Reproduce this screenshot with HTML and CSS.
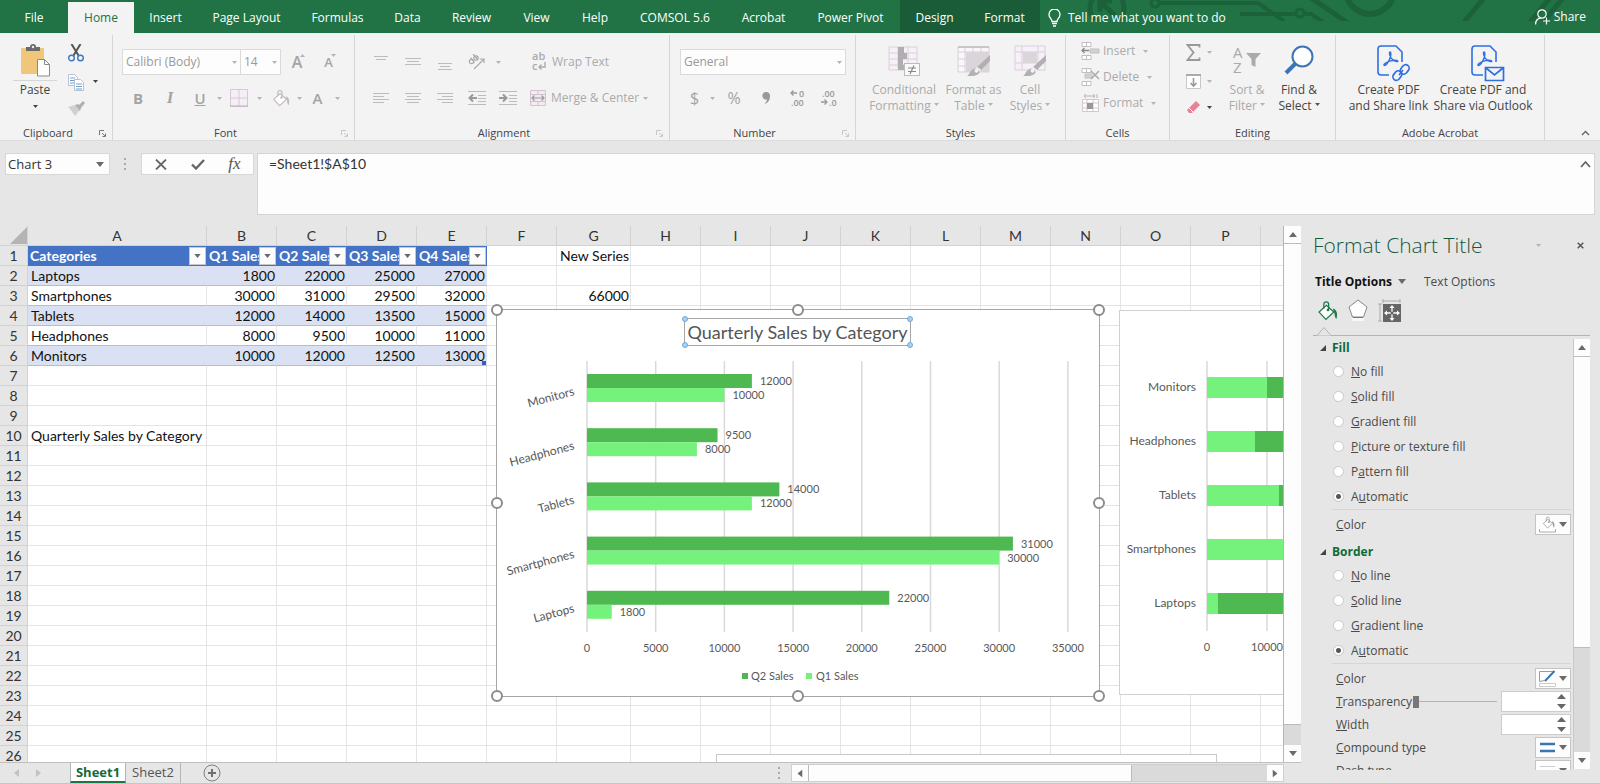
FILE: index.html
```html
<!DOCTYPE html>
<html lang="en">
<head>
<meta charset="utf-8">
<title>Sales workbook</title>
<link rel="stylesheet" href="styles.css">
</head>
<body>
<svg class="defs" aria-hidden="true">
  <symbol id="caret" viewBox="0 0 5 3"><path d="M0 0h5L2.500 3z" fill="currentColor"/></symbol>
  <symbol id="tri" viewBox="0 0 8 5"><path d="M0 0h8L4 5z" fill="currentColor"/></symbol>
  <symbol id="launch" viewBox="0 0 7 7"><path d="M.5 5V.5H5M3 3l3 3M6.500 3.500v3h-3" fill="none" stroke="currentColor"/></symbol>
  <symbol id="bucket" viewBox="0 0 20 20"><path d="M2 11.500 9 5l7 6.500-7.500 7z" fill="#fff" stroke="currentColor" stroke-width="1.200"/><path d="M6.500 8V4a2.300 2.300 0 0 1 4.600 0v5" fill="none" stroke="currentColor" stroke-width="1.200"/><circle cx="10.500" cy="9.500" r="1.300" fill="currentColor"/><path d="M15 8c4 1 5 5 3.500 10-1-1-1.500-2-1.800-5z" class="pour"/></symbol>
  <symbol id="brush" viewBox="0 0 24 23"><path d="M23 1v6L14 16l-4-3z" fill="#b2b0b2"/><path d="M10 13l4 3-2 2-4-3z" fill="#f3f3f3"/><path d="M8 14.500c2 0 5 2 4.500 4C11 21.500 6 22.500 0 22c3-1.500 3-7 8-7.500z" fill="#b2b0b2"/><ellipse cx="9.500" cy="16.800" rx="2" ry="2" fill="#f3f3f3"/></symbol>
  <symbol id="pdf" viewBox="0 0 34 38"><path d="M13 31H5a3 3 0 0 1-3-3V5a3 3 0 0 1 3-3h15l6 6v10" fill="none" stroke="#2f6fe0" stroke-width="1.600"/><path d="M8.500 21.500c-2-.6 1-3 4-4s6.500-1.800 9-.8c1.600 1.400-2.500 1.500-5-1.200s-3.500-4.500-3-7c.7-1.600 2 0 1.200 3.500S10.500 21.500 8.500 21.500z" fill="none" stroke="#2f6fe0" stroke-width="1.300"/></symbol>
</svg>

<header class="tabbar">
  <svg class="circuit" viewBox="0 0 520 21" fill="none" stroke="#1b623a" aria-hidden="true">
    <circle cx="27" cy="8" r="17" stroke-width="5"/><path d="M20 0v12M20 1h12M21 2l14 14" stroke-width="5"/>
    <circle cx="75" cy="3" r="4" stroke-width="3"/><path d="M80 3h98l26 18M160 14h56M225 14h6l12 8" stroke-width="4"/>
    <circle cx="220" cy="13" r="4" stroke-width="3"/><path d="M231-2l37 25" stroke-width="5"/><circle cx="290" cy="-10" r="24" stroke-width="6"/>
    <path d="M404-2l-20 24M470-2l-20 24M483-2l-20 24" stroke-width="5"/>
  </svg>
  <nav class="tabs">
    <a href="#">File</a><a href="#" class="on">Home</a><a href="#">Insert</a><a href="#">Page Layout</a><a href="#">Formulas</a><a href="#">Data</a><a href="#">Review</a><a href="#">View</a><a href="#">Help</a><a href="#">COMSOL 5.6</a><a href="#">Acrobat</a><a href="#">Power Pivot</a><a href="#" class="ctx">Design</a><a href="#" class="ctx">Format</a>
  </nav>
  <button class="tell"><svg width="13" height="18" viewBox="0 0 13 18" fill="none" stroke="#fff" stroke-width="1.300"><path d="M4 12.500c0-3-3-3.500-3-7a5.500 5.500 0 0 1 11 0c0 3.500-3 4-3 7zM4 14.500h5M5 17h3"/></svg>Tell me what you want to do</button>
  <button class="share"><svg width="15" height="16" viewBox="0 0 15 16" fill="none" stroke="#fff" stroke-width="1.200"><circle cx="7" cy="5" r="4.200"/><path d="M.6 15.500c0-4 2-6 5-6.300M11.500 8.500v7M8 12h7"/></svg>Share</button>
</header>

<section class="ribbon" aria-label="Ribbon">
  <div class="group g-clip">
    <div class="body">
      <button class="paste">
        <svg width="30" height="33" viewBox="0 0 30 33"><rect x="1" y="4" width="23" height="26" rx="1" fill="#efc67a"/><path d="M6 7V3h4a3 3 0 0 1 6 0h4v4z" fill="#6b6b6b"/><circle cx="13" cy="3" r="1.200" fill="#f3f3f3"/><path d="M17.500 15.500h7l5 5v11.500h-12z" fill="#fff" stroke="#8a8a8a"/><path d="M24.500 15.500v5h5" fill="none" stroke="#8a8a8a"/></svg>
        <span class="rule"></span><span>Paste</span><svg class="caret"><use href="#caret"/></svg>
      </button>
      <div class="mini">
        <button aria-label="Cut"><svg width="16" height="18" viewBox="0 0 16 18" fill="none"><path d="M3.500 0 10.500 11.500M12.500 0 5.500 11.500" stroke="#555" stroke-width="2"/><circle cx="3.500" cy="14" r="2.800" stroke="#3b78bd" stroke-width="1.400"/><circle cx="12.500" cy="14" r="2.800" stroke="#3b78bd" stroke-width="1.400"/></svg></button>
        <button aria-label="Copy"><svg width="16" height="18" viewBox="0 0 16 18" fill="#fff" stroke="#b8c2cc"><path d="M.5 1.500h6l3 3v8h-9z"/><path d="M2 5h5M2 7.500h5M2 10h5" stroke="#6a9fd0"/><path d="M6.500 6.500h6l3 3v8h-9z"/><path d="M8 11h6M8 13.500h6M8 16h6" stroke="#6a9fd0"/></svg><svg class="caret dark"><use href="#caret"/></svg></button>
        <button aria-label="Format Painter"><svg width="17" height="15" viewBox="0 0 17 15"><path d="M0 6l7-2 5 5-5 6C5 12 3 9 0 6z" fill="#d0d0d0"/><path d="M7 4l3-1 1 1 4-4 2 2-4 5-1 3z" fill="#b0b0b0"/></svg></button>
      </div>
    </div>
    <div class="cap">Clipboard<svg class="launch dark"><use href="#launch"/></svg></div>
  </div>

  <div class="group g-font">
    <div class="stack">
      <div class="row fonts">
        <label class="pick"><select aria-label="Font"><option>Calibri (Body)</option></select><svg class="caret"><use href="#caret"/></svg></label>
        <label class="pick"><select aria-label="Font size"><option>14</option></select><svg class="caret"><use href="#caret"/></svg></label>
        <button class="big" aria-label="Grow font">A<svg class="caret up"><use href="#caret"/></svg></button>
        <button class="small" aria-label="Shrink font">A<svg class="caret up flat"><use href="#caret"/></svg></button>
      </div>
      <div class="row styles">
        <button><b>B</b></button><button><i>I</i></button><button><u>U</u></button><svg class="caret"><use href="#caret"/></svg>
        <button aria-label="Borders"><svg width="18" height="18" viewBox="0 0 18 18"><path d="M.5.5h17v17H.5zM9 0v18M0 9h18" fill="#f6eef6" stroke="#d4cad4"/><path d="M0 17h18" stroke="#b8b4b8"/></svg></button><svg class="caret"><use href="#caret"/></svg>
        <button aria-label="Fill color"><svg class="gray" width="18" height="18"><use href="#bucket"/></svg></button><svg class="caret"><use href="#caret"/></svg>
        <button><strong>A</strong></button><svg class="caret"><use href="#caret"/></svg>
      </div>
    </div>
    <div class="cap">Font<svg class="launch"><use href="#launch"/></svg></div>
  </div>

  <div class="group g-align">
    <div class="stack">
      <div class="row al1">
        <button aria-label="Top align"><svg width="16" height="18"><path d="M1 3.500h14M3 6.500h10" class="ln"/></svg></button>
        <button aria-label="Middle align"><svg width="16" height="18"><path d="M0 5.500h16M2 8.500h12M0 11.500h16" class="ln"/></svg></button>
        <button aria-label="Bottom align"><svg width="16" height="18"><path d="M1 10.500h14M3 13.500h10M1 16.500h14" class="ln"/></svg></button>
        <button aria-label="Orientation"><svg width="17" height="16" viewBox="0 0 17 16"><g fill="none" stroke="#aaa" stroke-width="1.200"><circle cx="3.500" cy="7.500" r="2.200"/><path d="M2.500 3.500l4 5"/><circle cx="8" cy="4" r="2.200"/><path d="M5 0l5 6M6 15l10-10M12 5h4v4"/></g></svg></button><svg class="caret"><use href="#caret"/></svg>
        <button class="txt"><svg width="14" height="18" viewBox="0 0 14 18"><text x="0" y="7" class="glyph">ab</text><text x="0" y="17" class="glyph">c</text><path d="M13 9v5H7M9.500 11.500 7 14l2.500 2.500" fill="none" stroke="#aaa" stroke-width="1.400"/></svg>Wrap Text</button>
      </div>
      <div class="row al2">
        <button aria-label="Align left"><svg width="16" height="12"><path d="M0 1.500h16M0 4.500h11M0 7.500h16M0 10.500h11" class="ln"/></svg></button>
        <button aria-label="Center"><svg width="16" height="12"><path d="M0 1.500h16M2 4.500h12M0 7.500h16M2 10.500h12" class="ln"/></svg></button>
        <button aria-label="Align right"><svg width="16" height="12"><path d="M0 1.500h16M5 4.500h11M0 7.500h16M5 10.500h11" class="ln"/></svg></button>
        <button aria-label="Decrease indent"><svg width="18" height="14"><path d="M0 .5h18M10 4.500h8M10 7.500h8M10 10.500h8M0 13.500h18" class="ln"/><path d="M9 7H2M5 3.500 1.500 7 5 10.500" fill="none" stroke="#999" stroke-width="2"/></svg></button>
        <button aria-label="Increase indent"><svg width="18" height="14"><path d="M0 .5h18M10 4.500h8M10 7.500h8M10 10.500h8M0 13.500h18" class="ln"/><path d="M0 7h7M4 3.500 7.500 7 4 10.500" fill="none" stroke="#999" stroke-width="2"/></svg></button>
        <button class="txt"><svg width="16" height="16" viewBox="0 0 16 16"><path d="M.5.5h15v15H.5zM8 .5v4M8 11.500v4M.5 4.500h15M.5 11.500h15" fill="#f3eaf3" stroke="#cfc4cf"/><path d="M2 8h12M4.500 5.500 2 8l2.500 2.500M11.500 5.500 14 8l-2.500 2.500" fill="none" stroke="#999" stroke-width="1.200"/></svg>Merge &amp; Center</button><svg class="caret"><use href="#caret"/></svg>
      </div>
    </div>
    <div class="cap">Alignment<svg class="launch"><use href="#launch"/></svg></div>
  </div>

  <div class="group g-num">
    <div class="stack">
      <div class="row nf"><label class="pick"><select aria-label="Number format"><option>General</option></select><svg class="caret"><use href="#caret"/></svg></label></div>
      <div class="row nr">
        <button class="sym">$</button><svg class="caret"><use href="#caret"/></svg><button class="sym">%</button>
        <button aria-label="Comma style"><svg width="8" height="12" viewBox="0 0 8 12"><path d="M4 0a3.600 3.600 0 0 1 4 4c0 4-2 7-5.500 8C4 10 5 9 5 7.500A3.800 3.800 0 1 1 4 0z" fill="#999"/></svg></button>
        <button aria-label="Increase decimal"><svg width="16" height="18" viewBox="0 0 16 18"><path d="M7 4H1M3.500 1.500 1 4l2.500 2.500" fill="none" stroke="#999" stroke-width="1.300"/><text x="9" y="8" class="dec">0</text><text x="1" y="17" class="dec">.00</text></svg></button>
        <button aria-label="Decrease decimal"><svg width="16" height="18" viewBox="0 0 16 18"><path d="M0 13h6M3.500 10.500 6 13l-2.500 2.500" fill="none" stroke="#999" stroke-width="1.300"/><text x="1" y="8" class="dec">.00</text><text x="8" y="17" class="dec">.0</text></svg></button>
      </div>
    </div>
    <div class="cap">Number<svg class="launch"><use href="#launch"/></svg></div>
  </div>

  <div class="group g-sty">
    <div class="body">
      <button class="tall"><svg width="32" height="32" viewBox="0 0 32 32"><path d="M1 2h28v23H1zM10 2v23M20 2v23M1 8h28M1 14h28M1 20h28" fill="#f8f0f8" stroke="#d8d0d8"/><path d="M10 2h6v6h-6zM10 8h9v6h-9zM10 14h5v6h-5zM10 20h6v5h-6z" fill="#b0aeb0"/><rect x="16.500" y="18.500" width="15" height="12" fill="#fafafa" stroke="#bbb"/><path d="M20 23h8M20 26.500h8M26 20.500l-4 8.500" stroke="#888" stroke-width="1.200"/></svg><span>Conditional<br>Formatting <svg class="caret"><use href="#caret"/></svg></span></button>
      <button class="tall"><svg width="34" height="32" viewBox="0 0 34 32"><path d="M1 2h31v25H1zM8 2v25M16 2v25M24 2v25M1 7h31M1 14h31M1 21h31" fill="#fbf6fb" stroke="#d8d0d8"/><path d="M9 7h23v20H9z" fill="#d9d5d9"/><path d="M1 2h31" stroke="#aaa"/><use href="#brush" x="10" y="9" width="24" height="23"/></svg><span>Format as<br>Table <svg class="caret"><use href="#caret"/></svg></span></button>
      <button class="tall"><svg width="34" height="32" viewBox="0 0 34 32"><path d="M2 1h30v24H2zM9 1v24M25 1v24M2 7h30M2 18h30" fill="#f8f0f8" stroke="#d8d0d8"/><path d="M10 7h14v11H10z" fill="#d9d5d9"/><use href="#brush" x="10" y="9" width="24" height="23"/></svg><span>Cell<br>Styles <svg class="caret"><use href="#caret"/></svg></span></button>
    </div>
    <div class="cap">Styles</div>
  </div>

  <div class="group g-cell">
    <div class="list">
      <button><svg width="19" height="18" viewBox="0 0 19 18"><path d="M1 .5h9v4H1zM1 13.500h9v4H1zM5.500 .5v4M5.500 13.500v4" fill="#fff" stroke="#c4bcc4"/><path d="M9 7h9v4H9z" fill="#d4d0d4" stroke="#c0c0c0"/><path d="M8 8.500H1M3.500 6 1 8.500 3.500 11" fill="none" stroke="#888" stroke-width="1.300"/></svg>Insert<svg class="caret"><use href="#caret"/></svg></button>
      <button><svg width="19" height="18" viewBox="0 0 19 18"><path d="M1 .5h9v4H1zM1 13.500h9v4H1zM5.500 .5v4M5.500 13.500v4" fill="#fff" stroke="#c4bcc4"/><path d="M4 6h7v4H4z" fill="#d4d0d4" stroke="#c0c0c0"/><path d="M10 3l8 8M18 3l-8 8" stroke="#aaa" stroke-width="1.500"/></svg>Delete<svg class="caret"><use href="#caret"/></svg></button>
      <button><svg width="19" height="19" viewBox="0 0 19 19"><path d="M1.500 5.500h16v12h-16zM6 5v13M12 5v13M1 9h17M1 14h17" fill="#fff" stroke="#d0c8d0"/><path d="M6 9h6v6H6z" fill="#999"/><path d="M3 2h11M5 0 3 2l2 2M12 0l2 2-2 2M16 0v4" fill="none" stroke="#b4b4b4"/></svg>Format<svg class="caret"><use href="#caret"/></svg></button>
    </div>
    <div class="cap">Cells</div>
  </div>

  <div class="group g-edit">
    <div class="body">
      <div class="mini">
        <button aria-label="AutoSum"><svg width="15" height="17" viewBox="0 0 15 17"><path d="M13.500 3.500V1H1.500l6 7.500-6 7.500h12v-2.500" fill="none" stroke="#999" stroke-width="1.800"/></svg><svg class="caret"><use href="#caret"/></svg></button>
        <button aria-label="Fill"><svg width="15" height="15" viewBox="0 0 15 15"><path d="M.5.5h14v14H.5z" fill="#fff" stroke="#c8c8c8"/><path d="M0 1h15" stroke="#aaa" stroke-width="2"/><path d="M7.500 4v8M4.500 9l3 3 3-3" fill="none" stroke="#999" stroke-width="1.600"/></svg><svg class="caret"><use href="#caret"/></svg></button>
        <button aria-label="Clear"><svg width="15" height="13" viewBox="0 0 15 13"><path d="M1 9 10 0l4 4-8 8H3z" fill="#e88097"/><path d="M3 7l4 4" stroke="#fff"/></svg><svg class="caret dark"><use href="#caret"/></svg></button>
      </div>
      <button class="tall"><svg width="30" height="32" viewBox="0 0 30 32"><text x="1" y="13" class="az">A</text><text x="1" y="28" class="az">Z</text><path d="M14 8h15l-5.500 6v8l-4-2v-6z" fill="#aaa"/></svg><span>Sort &amp;<br>Filter <svg class="caret"><use href="#caret"/></svg></span></button>
      <button class="tall live"><svg width="30" height="32" viewBox="0 0 30 32"><path d="M2 28 12 18" stroke="#3a76b5" stroke-width="4"/><circle cx="18.500" cy="11.500" r="10" fill="#fff" stroke="#3a76b5" stroke-width="2"/></svg><span>Find &amp;<br>Select <svg class="caret"><use href="#caret"/></svg></span></button>
    </div>
    <div class="cap">Editing</div>
  </div>

  <div class="group g-pdf">
    <div class="body">
      <button class="tall live"><svg width="34" height="38" viewBox="0 0 34 38"><use href="#pdf" width="34" height="38"/><g fill="none" stroke="#2f6fe0" stroke-width="1.700"><rect x="-4.500" y="-3.500" width="10" height="7" rx="3.500" transform="translate(21 32) rotate(-52)"/><rect x="-5.500" y="-3.500" width="10" height="7" rx="3.500" transform="translate(29 25) rotate(-52)"/><path d="M23 31l4-5"/></g></svg><span>Create PDF<br>and Share link</span></button>
      <button class="tall live"><svg width="34" height="38" viewBox="0 0 34 38"><use href="#pdf" width="34" height="38"/><path d="M15.500 23.500h18v13h-18zM16 24l8.500 7 8.500-7" fill="#f3f3f3" stroke="#2f6fe0" stroke-width="1.700"/></svg><span>Create PDF and<br>Share via Outlook</span></button>
    </div>
    <div class="cap">Adobe Acrobat</div>
  </div>
  <div class="tail"><button aria-label="Collapse ribbon"><svg width="9" height="6" viewBox="0 0 9 6"><path d="M1 5l3.500-3.500L8 5" fill="none" stroke="#666" stroke-width="1.400"/></svg></button></div>
</section>

<section class="fbar" aria-label="Formula bar">
  <label class="name"><input aria-label="Name box" value="Chart 3"><svg class="tri"><use href="#tri"/></svg></label>
  <span class="dots"></span>
  <div class="fbtns">
    <button aria-label="Cancel"><svg width="12" height="11" viewBox="0 0 12 11"><path d="M1 .5l10 10M11 .5l-10 10" stroke="#666" stroke-width="1.800"/></svg></button>
    <button aria-label="Enter"><svg width="14" height="11" viewBox="0 0 14 11"><path d="M1 5.500l4 4L13 1" fill="none" stroke="#666" stroke-width="2.400"/></svg></button>
    <button class="fx" aria-label="Insert function"><i>fx</i></button>
  </div>
  <div class="formula"><textarea aria-label="Formula">=Sheet1!$A$10</textarea><svg width="11" height="8" viewBox="0 0 11 8"><path d="M1 7l4.500-5L10 7" fill="none" stroke="#666" stroke-width="1.800"/></svg></div>
</section>

<main>
  <div class="book">
    <div class="view">
      <div class="sheet">
        <table id="grid"></table>
        <figure class="chart c1">
          <svg id="chart1" width="602" height="386"></svg>
          <i class="h nw"></i><i class="h n"></i><i class="h ne"></i><i class="h w"></i><i class="h e"></i><i class="h sw"></i><i class="h s"></i><i class="h se"></i>
          <figcaption>Quarterly Sales by Category<i class="d nw"></i><i class="d ne"></i><i class="d sw"></i><i class="d se"></i></figcaption>
        </figure>
        <figure class="chart c2"><svg id="chart2" width="500" height="385"></svg></figure>
        <figure class="chart c3"></figure>
      </div>
      <div class="vscroll"><button aria-label="Scroll up"><svg class="tri up"><use href="#tri"/></svg></button><span class="thumb"></span><button aria-label="Scroll down"><svg class="tri"><use href="#tri"/></svg></button></div>
    </div>
    <footer>
      <svg class="navs" width="28" height="8" viewBox="0 0 28 8"><path d="M5 0v8L0 4zM22 0v8l5-4z" fill="#c2c2c2"/></svg>
      <a href="#" class="tab cur">Sheet1</a><a href="#" class="tab">Sheet2</a>
      <button class="add" aria-label="New sheet"><svg width="18" height="18" viewBox="0 0 18 18"><circle cx="9" cy="9" r="8" fill="none" stroke="#808080"/><path d="M9 5v8M5 9h8" stroke="#707070" stroke-width="2"/></svg></button>
      <span class="dots"></span>
      <div class="hscroll"><button aria-label="Scroll left"><svg class="tri left"><use href="#tri"/></svg></button><span class="thumb"></span><button aria-label="Scroll right"><svg class="tri right"><use href="#tri"/></svg></button></div>
    </footer>
  </div>

  <aside>
    <div class="phead"><h2>Format Chart Title</h2><svg class="caret"><use href="#caret"/></svg><button aria-label="Close"><svg width="7" height="7" viewBox="0 0 7 7"><path d="M.7.7l5.600 5.600M6.300.7.7 6.300" stroke="#555" stroke-width="1.500"/></svg></button></div>
    <div class="ptabs"><button class="cur">Title Options<svg class="tri"><use href="#tri"/></svg></button><button>Text Options</button></div>
    <div class="picons">
      <button aria-label="Fill and line"><svg class="green" width="21" height="21"><use href="#bucket"/></svg></button>
      <button aria-label="Effects"><svg width="20" height="22" viewBox="0 0 20 22"><path d="M10 1l9 7-3.500 10h-11L1 8z" fill="#fff" stroke="#888"/><path d="M4 19h12v3H4z" fill="#f7f7f7"/><path d="M5 18.500h10" stroke="#777"/></svg></button>
      <button aria-label="Size and properties"><svg width="23" height="23" viewBox="0 0 23 23"><path d="M5 2h17M5 0v4M22 0v4M2 5v17M0 5h4M0 22h4" stroke="#aaa"/><path d="M5 5h18v18H5z" fill="#666"/><path d="M14 8v12M8 14h12" stroke="#fff" stroke-width="1.300"/><path d="M14 6l2.500 3h-5zM14 22l2.500-3h-5zM6 14l3-2.500v5zM22 14l-3-2.500v5z" fill="#fff"/><circle cx="14" cy="14" r="1.500" fill="#666"/></svg></button>
    </div>
    <svg class="notch" width="18" height="9" viewBox="0 0 18 9"><path d="M0 8.500h4L11 .5l7 8" fill="#e6e6e6" stroke="#b4b4b4"/></svg>
    <div class="pbody">
      <div class="opts">
        <h3>Fill</h3>
        <label><input type="radio" name="fill"><span><u>N</u>o fill</span></label>
        <label><input type="radio" name="fill"><span><u>S</u>olid fill</span></label>
        <label><input type="radio" name="fill"><span><u>G</u>radient fill</span></label>
        <label><input type="radio" name="fill"><span><u>P</u>icture or texture fill</span></label>
        <label><input type="radio" name="fill"><span>P<u>a</u>ttern fill</span></label>
        <label><input type="radio" name="fill" checked><span>A<u>u</u>tomatic</span></label>
        <hr>
        <div class="prop"><span><u>C</u>olor</span><button class="drop" aria-label="Fill color"><svg class="blue" width="17" height="17" viewBox="0 0 17 17"><use href="#bucket" x="2" y="0" width="15" height="13"/><path d="M.5 13v3h16v-3" fill="#fff" stroke="#aaa"/></svg><svg class="tri"><use href="#tri"/></svg></button></div>
        <h3 class="second">Border</h3>
        <label><input type="radio" name="line"><span><u>N</u>o line</span></label>
        <label><input type="radio" name="line"><span><u>S</u>olid line</span></label>
        <label><input type="radio" name="line"><span><u>G</u>radient line</span></label>
        <label><input type="radio" name="line" checked><span>A<u>u</u>tomatic</span></label>
        <hr>
        <div class="prop"><span><u>C</u>olor</span><button class="drop" aria-label="Line color"><svg width="17" height="17" viewBox="0 0 17 17"><path d="M.5 11.500v-10h14M.5 11.500l5-1" fill="none" stroke="#999"/><path d="M15.500 1 6 11" stroke="#3a76b5" stroke-width="2"/><path d="M.5 13.500h16v3H.5z" fill="#fff" stroke="#ccc"/></svg><svg class="tri"><use href="#tri"/></svg></button></div>
        <div class="prop"><label for="tr"><u>T</u>ransparency</label><input type="range" id="tr" value="0"><span class="spin"><input aria-label="Transparency value"><svg width="9" height="15" viewBox="0 0 9 15"><path d="M0 5h9L4.500 0zM0 10h9l-4.500 5z" fill="#666"/></svg></span></div>
        <div class="prop"><label for="wd"><u>W</u>idth</label><span class="spin"><input id="wd"><svg width="9" height="15" viewBox="0 0 9 15"><path d="M0 5h9L4.500 0zM0 10h9l-4.500 5z" fill="#666"/></svg></span></div>
        <div class="prop"><span><u>C</u>ompound type</span><button class="drop" aria-label="Compound type"><svg width="17" height="17" viewBox="0 0 17 17"><path d="M1 5h15M1 12h15" stroke="#3a76b5" stroke-width="2.400"/></svg><svg class="tri"><use href="#tri"/></svg></button></div>
        <div class="prop"><span><u>D</u>ash type</span><button class="drop" aria-label="Dash type"><svg width="17" height="17" viewBox="0 0 17 17"><path d="M1 4.500h15" stroke="#ccc"/><path d="M1 8.500h15" stroke="#999" stroke-dasharray="3 1"/></svg><svg class="tri"><use href="#tri"/></svg></button></div>
      </div>
      <div class="vscroll inner"><button aria-label="Scroll up"><svg class="tri up"><use href="#tri"/></svg></button><span class="thumb"></span><button aria-label="Scroll down"><svg class="tri"><use href="#tri"/></svg></button></div>
    </div>
  </aside>
</main>
<script src="app.js"></script>
</body>
</html>
```
FILE: styles.css
```css
* { box-sizing: border-box; }
body { margin: 0; height: 100vh; overflow: hidden; display: flex; flex-direction: column; background: #e6e6e6; color: #333; font: 12px/16px "Open Sans", "Noto Sans", sans-serif; }
button, input, select, textarea { font: inherit; color: inherit; border: 0; background: none; padding: 0; margin: 0; outline: 0; border-radius: 0; }
a { color: inherit; text-decoration: none; }
svg { display: block; flex: none; }
.defs { position: absolute; width: 0; height: 0; }
.caret { width: 5px; height: 3px; color: #b4b4b4; }
.caret.dark { color: #444; }
.tri { width: 8px; height: 5px; color: #6a6a6a; }
.up { transform: rotate(180deg); }
.left { transform: rotate(90deg); }
.right { transform: rotate(-90deg); }
.pour { fill: currentColor; }

/* tab strip */
.tabbar { position: relative; flex: none; display: flex; height: 33px; background: #217346; color: #fff; }
.circuit { position: absolute; right: 0; top: 0; width: 520px; height: 21px; }
.tabs { display: grid; grid-template-columns: 68px 66px 63px 99px 83px 57px 71px 59px 58px 102px 75px 99px 69px 71px; }
.tabs a { display: flex; align-items: center; justify-content: center; padding-top: 2px; white-space: nowrap; }
.tabs .on { margin-top: 2px; padding-top: 0; background: #f3f3f3; color: #217346; }
.tabs .ctx { background: #1a5c38; }
.tell { position: relative; display: flex; align-items: center; gap: 7px; padding: 2px 0 0 8px; }
.share { position: relative; margin-left: auto; display: flex; align-items: center; gap: 4px; padding-right: 14px; }

/* ribbon */
.ribbon { flex: none; display: flex; height: 108px; background: #f3f3f3; color: #aaa; border-bottom: 1px solid #dcdcdc; }
.group { position: relative; flex: none; display: flex; flex-direction: column; justify-content: space-between; border-right: 1px solid #d6d6d6; margin-top: 2px; }
.g-clip { width: 113px; } .g-font { width: 242px; } .g-align { width: 315px; } .g-num { width: 186px; } .g-sty { width: 210px; } .g-cell { width: 104px; } .g-edit { width: 166px; } .g-pdf { width: 209px; }
.cap { height: 14px; line-height: 14px; text-align: center; color: #444; font-size: 11px; padding-right: 16px; }
.g-sty .cap, .g-cell .cap, .g-edit .cap, .g-pdf .cap { padding-right: 0; }
.launch { position: absolute; right: 6px; bottom: 3px; width: 7px; height: 7px; color: #c8c8c8; }
.launch.dark { color: #777; }
.body { display: flex; padding-top: 9px; }
.paste { width: 44px; margin-left: 13px; display: flex; flex-direction: column; align-items: center; color: #444; }
.paste .rule { width: 44px; height: 1px; background: #d6d6d6; margin: 3px 0 1px; }
.paste .caret { color: #444; margin-top: 7px; }
.mini { display: flex; flex-direction: column; justify-content: space-between; height: 72px; }
.g-clip .mini { margin-left: 11px; }
.mini button { display: flex; align-items: center; gap: 9px; }
.stack { display: flex; flex-direction: column; gap: 10px; padding-top: 14px; }
.row { display: grid; height: 26px; align-items: center; justify-items: center; }
.fonts { grid-template-columns: 119px 40px 32px 31px; padding-left: 9px; }
.styles { grid-template-columns: 32px 32px 28px 10px 30px 10px 33px 4px 33px 6px; padding-left: 9px; }
.pick { position: relative; width: 100%; height: 26px; border: 1px solid #dadada; background: #fdfdfd; }
.pick + .pick { border-left: 0; }
.pick select { appearance: none; width: 100%; height: 24px; padding-left: 3px; color: #999; }
.pick .caret { position: absolute; right: 3px; top: 11px; }
.row button { display: flex; align-items: center; justify-content: center; }
.row b, .row i, .row u, .row strong { font-size: 15px; color: #a4a4a4; }
.row i { font-family: "Liberation Serif", serif; font-size: 17px; font-weight: bold; }
.row u, .row strong { font-weight: 600; }
.big, .small { position: relative; font-weight: 600; font-size: 16px; color: #a4a4a4; }
.small { font-size: 13px; }
.big .caret, .small .caret { position: absolute; right: -3px; top: 0; }
.small .flat { transform: none; }
.al1 { grid-template-columns: 32px 32px 31px 32px 4px 1fr; padding-left: 10px; }
.al2 { grid-template-columns: 32px 32px 32px 31px 32px 118px 6px; padding-left: 10px; }
.row .txt { justify-self: start; gap: 5px; white-space: nowrap; margin-left: 6px; }
.al1 .txt { margin-left: 36px; gap: 6px; }
.al1 .txt svg { overflow: visible; }
.al1 .caret { margin-left: 8px; }
.ln { stroke: #bcbcbc; fill: none; }
.glyph { font-size: 11px; font-weight: 600; fill: #aaa; }
.nf { grid-template-columns: 166px; padding-left: 10px; }
.nr { grid-template-columns: 29px 6px 38px 26px 38px 24px; padding-left: 10px; }
.nr svg { overflow: visible; }
.sym { font-size: 16px; color: #a4a4a4; }
.dec { font-size: 9px; font-weight: 600; fill: #999; }
.tall { display: flex; flex-direction: column; align-items: center; gap: 5px; white-space: nowrap; }
.tall > svg:first-child { height: 32px; overflow: visible; }
.tall .caret { display: inline-block; vertical-align: 4px; }
.live { color: #444; } .live .caret { color: #555; }
.g-sty .body { display: grid; grid-template-columns: 78px 61px 52px; padding: 10px 0 0 9px; }
.list { display: flex; flex-direction: column; gap: 8px; padding: 7px 0 0 15px; }
.list button { display: flex; align-items: center; gap: 3px; height: 18px; }
.list .caret { margin-left: 5px; }
.g-edit .mini { width: 39px; margin-left: 16px; height: 70px; }
.g-edit .mini button { gap: 6px; }
.g-edit .tall { margin-top: 1px; width: 44px; }
.g-edit .tall + .tall { margin-left: 8px; }
.az { font-size: 15px; fill: #aaa; }
.g-pdf .body { display: grid; grid-template-columns: 85px 104px; padding-left: 10px; }
.g-pdf .tall { gap: 6px; }
.g-pdf .tall > svg { height: 38px; margin: 0 0 -6px 8px; }
.tail { flex: 1; display: flex; align-items: flex-end; justify-content: flex-end; padding: 0 10px 4px 0; }

/* formula bar */
.fbar { flex: none; display: flex; height: 79px; padding: 12px 5px 0 5px; font-size: 13px; }
.name { display: flex; align-items: center; width: 105px; height: 22px; padding: 0 5px 0 2px; background: #fdfdfd; border: 1px solid #d8d8d8; }
.name input { flex: 1; min-width: 0; color: #333; }
.dots { width: 2px; height: 12px; margin: 5px 15px 5px 14px; background: repeating-linear-gradient(#aaa 0 2px, transparent 2px 5px); }
.fbtns { width: 113px; height: 22px; display: grid; grid-template-columns: 1fr 1fr 1fr; background: #fdfdfd; border: 1px solid #d8d8d8; }
.fbtns button { display: flex; align-items: center; justify-content: center; }
.fx { font-family: "Liberation Serif", serif; font-size: 17px; color: #555; }
.formula { flex: 1; display: flex; margin-left: 3px; height: 62px; background: #fdfdfd; border: 1px solid #d4d4d4; padding: 1px 3px 0 11px; }
.formula textarea { flex: 1; resize: none; font-family: Lato, sans-serif; font-size: 14px; line-height: 18px; color: #333; }
.formula svg { margin-top: 5px; }

/* workbook */
main { flex: 1; min-height: 0; display: flex; border-bottom: 1px solid #c6c6c6; }
.book { flex: 1; min-width: 0; display: flex; flex-direction: column; }
.view { flex: 1; min-height: 0; display: flex; padding-top: 6px; }
.sheet { position: relative; flex: 1; min-width: 0; overflow: hidden; background: #fff; border-right: 1px solid #b5b5b5; }
table { table-layout: fixed; border-collapse: separate; border-spacing: 0; width: 1331px; font: 14px/19px Lato, sans-serif; color: #111; }
td, th { height: 20px; padding: 0 1px 0 3px; border: solid #e4e4e4; border-width: 0 1px 1px 0; white-space: nowrap; overflow: hidden; font-weight: 400; }
thead th, tbody th { padding: 0; background: #e6e6e6; border-color: #d2d2d2; color: #333; text-align: center; }
.corner svg { margin-left: auto; }
.num { text-align: right; }
.hd { background: #4472c4; color: #fff; font-weight: 700; border-color: #4472c4; padding: 0 0 0 2px; }
.hd div { display: flex; height: 19px; overflow: hidden; }
.hd span { flex: 1; min-width: 0; overflow: hidden; }
.hd button { flex: none; width: 17px; height: 18px; margin-top: 1px; background: #fdfdfd; border: 1px solid #c8c8c8; display: flex; align-items: center; justify-content: center; }
.hd .tri { width: 7px; height: 4px; }
.band { background: #d9e1f2; border-color: #d9e1f2 #d9e1f2 #a9bfe4; }
.plain { border-bottom-color: #a9bfe4; }
.end { background: linear-gradient(#3f5fb5, #3f5fb5) right bottom / 4px 4px no-repeat #d9e1f2; }
.chart { position: absolute; margin: 0; background: #fff; }
.chart text { font: 11px Lato, sans-serif; fill: #595959; }
.chart .cat { font-size: 12px; }
.c1 { left: 497px; top: 84px; width: 602px; height: 386px; outline: 1px solid #a6a6a6; }
.c2 { left: 1119px; top: 84px; width: 500px; height: 385px; border: 1px solid #d0d0d0; }
.c3 { left: 716px; top: 528px; width: 501px; height: 200px; border: 1px solid #c8c8c8; }
.c1 figcaption { position: absolute; left: 187px; top: 8px; width: 227px; height: 28px; border: 1px solid #a6a6a6; text-align: center; white-space: nowrap; font: 18px/26px Lato, sans-serif; color: #555; }
.h { position: absolute; width: 12px; height: 12px; margin: -6px; border: 2px solid #8c8c8c; border-radius: 50%; background: #fff; }
.d { position: absolute; width: 6px; height: 6px; margin: -3px; border: 1px solid #6aa9de; border-radius: 50%; background: #a9d2f5; }
.nw, .w, .sw { left: 0; } .n, .s { left: 50%; } .ne, .e, .se { left: 100%; }
.nw, .n, .ne { top: 0; } .w, .e { top: 50%; } .sw, .s, .se { top: 100%; }

.vscroll { flex: none; width: 17px; display: flex; flex-direction: column; background: #dadada; }
.vscroll button { flex: none; height: 17px; background: #fdfdfd; display: flex; align-items: center; justify-content: center; }
.vscroll .thumb { background: #fdfdfd; border: solid #bbb; border-width: 1px 0; flex: 0 1 90%; margin-bottom: auto; }
.inner .thumb { flex-basis: 68%; }
footer { flex: none; display: flex; align-items: stretch; height: 21px; border-top: 1px solid #c0c0c0; font-size: 13px; color: #555; }
.navs { margin: 6px 28px 0 14px; }
.tab { width: 55px; border-right: 1px solid #b4b4b4; text-align: center; line-height: 19px; }
.cur.tab { width: 56px; background: #fff; border-left: 1px solid #b4b4b4; border-bottom: 2px solid #217346; color: #17693a; font-weight: 700; }
.add { margin-left: 22px; }
footer .dots { margin: 4px 11px 0 auto; }
.hscroll { width: 493px; height: 18px; margin: 1px 17px 0 0; border: 1px solid #cfcfcf; display: flex; background: #dadada; }
.hscroll button { width: 16px; background: #fdfdfd; display: flex; align-items: center; justify-content: center; }
.hscroll .thumb { flex: 0 0 324px; background: #fdfdfd; border: solid #bbb; border-width: 0 1px; margin-right: auto; }

/* format pane */
aside { flex: none; width: 299px; display: flex; flex-direction: column; padding: 11px 10px 13px 12px; color: #4a4a4a; }
.phead { display: flex; align-items: center; height: 28px; }
h2 { flex: 1; margin: 0; font-size: 21px; line-height: 28px; font-weight: 300; color: #17593a; white-space: nowrap; }
.phead .caret { margin-right: 36px; }
.phead button { margin-right: 6px; }
.ptabs { display: flex; gap: 18px; height: 20px; margin-top: 13px; padding-left: 2px; }
.ptabs .cur { display: flex; align-items: center; gap: 6px; font-weight: 700; color: #111; }
.ptabs .tri { margin-bottom: 2px; }
.picons { display: flex; align-items: center; gap: 10px; height: 24px; margin: 6px 0 0 4px; }
.notch { margin-top: 5px; margin-bottom: -1px; position: relative; }
.pbody { flex: 1; min-height: 0; display: flex; border-top: 1px solid #b4b4b4; padding-top: 3px; }
.inner { border-left: 1px solid #c8c8c8; margin-bottom: 1px; }
.opts { flex: 1; min-width: 0; overflow: hidden; padding-right: 2px; }
h3 { position: relative; margin: 0; padding-left: 19px; height: 20px; font-size: 12px; line-height: 18px; font-weight: 700; color: #0c6b37; }
h3::before { content: ""; position: absolute; left: 7px; top: 6px; border: solid transparent; border-width: 0 0 6px 6px; border-bottom-color: #444; }
.second { margin-top: 8px; }
.opts > label { display: flex; align-items: center; gap: 7px; height: 25px; padding-left: 20px; }
.opts > label input { appearance: none; width: 11px; height: 11px; border: 1px solid #c8c8c8; border-radius: 50%; background: #fff; }
.opts > label input:checked { background: radial-gradient(#555 0 2px, #fff 3px); }
hr { margin: 0 0 4px 19px; border: 0; height: 1px; background: #d6d6d6; }
.prop { display: flex; align-items: center; justify-content: space-between; height: 21px; margin: 0 0 2px 23px; }
.drop { display: flex; align-items: center; justify-content: space-between; width: 36px; height: 21px; padding: 0 3px; background: #fdfdfd; border: 1px solid #c4c4c4; }
.spin { display: flex; align-items: center; width: 70px; height: 21px; background: #fff; border: 1px solid #ccc; padding-right: 4px; }
.spin input { flex: 1; min-width: 0; }
input[type=range] { appearance: none; flex: 1; min-width: 0; height: 12px; margin: 0 4px 0 1px; background: linear-gradient(#b4b4b4, #b4b4b4) center / 100% 1px no-repeat; }
input[type=range]::-webkit-slider-thumb { appearance: none; width: 6px; height: 12px; background: #777; }
.green { color: #1f7a4a; } .gray { color: #c0b8c0; } .blue { color: #999; } .blue .pour { fill: #3a76b5; }
```
FILE: app.js
```js
const rows = {
  1: ['Categories', 'Q1 Sales', 'Q2 Sales', 'Q3 Sales', 'Q4 Sales', '', 'New Series'],
  2: ['Laptops', 1800, 22000, 25000, 27000],
  3: ['Smartphones', 30000, 31000, 29500, 32000, '', 66000],
  4: ['Tablets', 12000, 14000, 13500, 15000],
  5: ['Headphones', 8000, 9500, 10000, 11000],
  6: ['Monitors', 10000, 12000, 12500, 13000],
  10: ['Quarterly Sales by Category']
};
const letters = 'ABCDEFGHIJKLMNOPQ'.split('');
const widths = [28, 179, 70, 70, 70, 70, 70, 74].concat(Array(10).fill(70));
let html = '<colgroup>' + widths.map(w => `<col style="width:${w}px">`).join('') + '</colgroup><thead><tr><th class="corner"><svg width="17" height="17"><path d="M17 0v17H0z" fill="#b4b4b4"/></svg></th>';
html += letters.map(l => `<th>${l === 'Q' ? '' : l}</th>`).join('') + '</tr></thead><tbody>';
for (let r = 1; r <= 26; r++) {
  html += `<tr><th>${r}</th>`;
  letters.forEach((l, c) => {
    const v = (rows[r] || [])[c] ?? '';
    if (r === 1 && c < 5) {
      html += `<td class="hd"><div><span>${v}</span><button aria-label="Filter ${v}"><svg class="tri"><use href="#tri"/></svg></button></div></td>`;
      return;
    }
    const cls = [];
    if (typeof v === 'number') cls.push('num');
    if (r <= 6 && c < 5) cls.push(r % 2 ? 'plain' : 'band');
    if (r === 6 && c === 4) cls.push('end');
    html += `<td class="${cls.join(' ')}">${v}</td>`;
  });
  html += '</tr>';
}
document.getElementById('grid').innerHTML = html + '</tbody>';

const order = [6, 5, 4, 3, 2].map(r => rows[r]);
const dark = '#4eb951', light = '#74f27b';
let s = '';
for (let i = 0; i <= 7; i++) {
  const x = 90 + i * 68.7;
  s += `<path d="M${x} 51V322" stroke="#d9d9d9" stroke-width="1.500"/><text x="${x}" y="342" text-anchor="middle">${i * 5000}</text>`;
}
order.forEach(([name, q1, q2], i) => {
  const y = 64 + i * 54.2, a = q2 * 0.01374, b = q1 * 0.01374;
  s += `<rect x="90" y="${y}" width="${a}" height="14" fill="${dark}"/><rect x="90" y="${y + 14}" width="${b}" height="14" fill="${light}"/>`;
  s += `<text x="${98 + a}" y="${y + 11}">${q2}</text><text x="${98 + b}" y="${y + 25}">${q1}</text>`;
  s += `<text class="cat" transform="translate(78 ${y + 21}) rotate(-15)" text-anchor="end">${name}</text>`;
});
s += `<rect x="245" y="363" width="6" height="6" fill="${dark}"/><text x="254" y="370">Q2 Sales</text><rect x="309" y="363" width="6" height="6" fill="${light}"/><text x="319" y="370">Q1 Sales</text>`;
document.getElementById('chart1').innerHTML = s;

s = '';
for (let i = 0; i <= 6; i++) {
  const x = 87 + i * 60;
  s += `<path d="M${x} 50V320" stroke="#d9d9d9" stroke-width="1.500"/><text x="${x}" y="340" text-anchor="middle">${i * 10000}</text>`;
}
order.forEach(([name, q1, q2], i) => {
  const y = 66 + i * 54, w = q1 * 0.006;
  s += `<rect x="87" y="${y}" width="${w}" height="21" fill="${light}"/><rect x="${87 + w}" y="${y}" width="${q2 * 0.006}" height="21" fill="${dark}"/>`;
  s += `<text class="cat" x="76" y="${y + 14}" text-anchor="end">${name}</text>`;
});
document.getElementById('chart2').innerHTML = s;
```
